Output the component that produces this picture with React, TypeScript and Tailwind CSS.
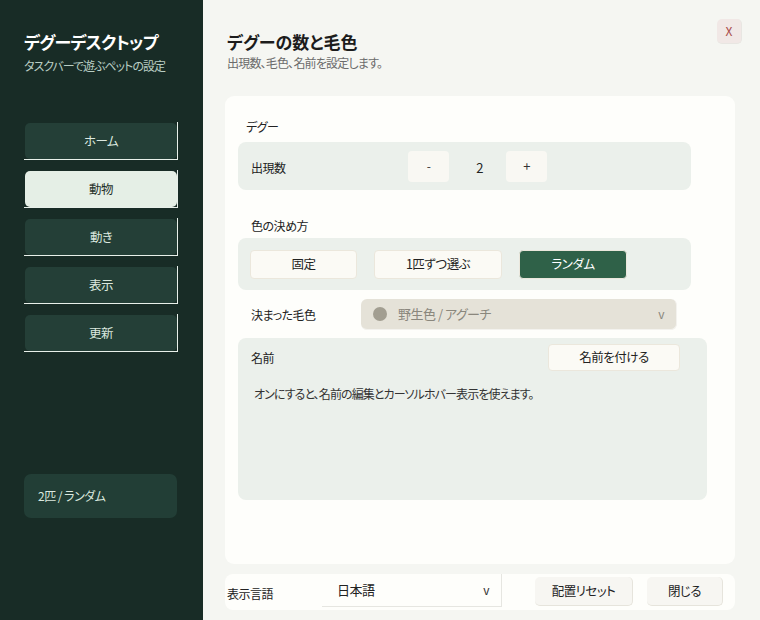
import React from "react";

const navItems = ["ホーム", "動物", "動き", "表示", "更新"];

function NavItem({ label, active }: { label: string; active?: boolean }) {
  return (
    <div className="w-[154px] h-[38px] pl-px pt-px border-r border-b border-[#e8f0ea]">
      <div
        className={
          "w-[152px] h-[36px] rounded-[5px] flex items-center justify-center text-[12.5px] tracking-[-0.6px] " +
          (active ? "bg-[#e5efe6] text-[#1f2f29]" : "bg-[#243f37] text-[#dbe8df]")
        }
      >
        {label}
      </div>
    </div>
  );
}

function ChoiceButton({ label, w, active }: { label: string; w: string; active?: boolean }) {
  return (
    <div
      className={
        w +
        " h-[29px] rounded-[4px] border border-[#ebe7dc] flex items-center justify-center text-[12.5px] tracking-[-0.5px] " +
        (active ? "bg-[#2f6148] text-white" : "bg-[#fbfaf5] text-[#222]")
      }
    >
      {label}
    </div>
  );
}

export default function App() {
  return (
    <div
      className="w-[760px] h-[620px] flex overflow-hidden [font-feature-settings:'palt']"
      style={{ fontFamily: "'Noto Sans CJK JP', 'Noto Sans', sans-serif" }}
    >
      <aside className="w-[203px] h-full bg-[#182c26] flex flex-col pl-[24px] pt-[30px]">
        <h1 className="text-[17px] leading-[24px] font-bold text-white tracking-[-0.7px]">デグーデスクトップ</h1>
        <p className="text-[12px] leading-[16px] mt-[4px] text-[#b8cdc3] tracking-[-1px]">タスクバーで遊ぶペットの設定</p>
        <nav className="mt-[48px] flex flex-col gap-[10px]">
          {navItems.map((n) => (
            <NavItem key={n} label={n} active={n === "動物"} />
          ))}
        </nav>
        <div className="mt-[122px] w-[153px] h-[44px] rounded-[7px] bg-[#223e36] flex items-center pl-[14px] text-[12px] text-[#dbe8df] tracking-[-0.5px]">
          2匹 / ランダム
        </div>
      </aside>

      <main className="flex-1 h-full bg-[#f5f6f2] flex flex-col pl-[22px]">
        <div className="h-[96px] flex justify-between items-start pt-[19px] pr-[18px]">
          <div className="mt-[11px] ml-[2px]">
            <h2 className="text-[17px] leading-[24px] font-bold text-[#1c1c1c]">デグーの数と毛色</h2>
            <p className="text-[12px] leading-[16px] mt-[1px] text-[#6b6b6b] tracking-[-0.8px]">出現数、毛色、名前を設定します。</p>
          </div>
          <div className="w-[25px] h-[25px] rounded-[5px] bg-[#f1e8e6] border-r border-b border-[#e8e6e2] flex items-center justify-center text-[12px] text-[#a84848]">
            X
          </div>
        </div>

        <section className="w-[510px] h-[468px] bg-[#fefefb] rounded-[9px] pt-[23px] flex flex-col text-[12px] tracking-[-0.5px]">
          <div className="ml-[21px] text-[12px] leading-[16px] text-[#222]">デグー</div>
          <div className="ml-[13px] mt-[7px] w-[453px] h-[48px] rounded-[8px] bg-[#ebf0eb] flex items-center pl-[13px]">
            <span className="w-[157px] text-[12px] text-[#222] mt-[3px]">出現数</span>
            <div className="w-[41px] h-[31px] rounded-[4px] bg-[#f9f8f3] flex items-center justify-center text-[12px] text-[#333]">
              -
            </div>
            <span className="w-[57px] text-center text-[13px] text-[#222] pl-[4px] mt-[3px]">2</span>
            <div className="w-[41px] h-[31px] rounded-[4px] bg-[#f9f8f3] flex items-center justify-center text-[13px] text-[#333]">
              +
            </div>
          </div>

          <div className="ml-[26px] mt-[28px] text-[12px] leading-[16px] text-[#222]">色の決め方</div>
          <div className="ml-[13px] mt-[4px] w-[453px] h-[52px] rounded-[8px] bg-[#ebf0eb] flex items-center pl-[12px] gap-[17px]">
            <ChoiceButton label="固定" w="w-[107px]" />
            <ChoiceButton label="1匹ずつ選ぶ" w="w-[128px]" />
            <ChoiceButton label="ランダム" w="w-[108px]" active />
          </div>

          <div className="ml-[26px] mt-[9px] flex items-center">
            <span className="w-[110px] text-[12px] text-[#222]">決まった毛色</span>
            <div className="w-[316px] h-[31px] rounded-[6px] bg-[#e5e2d8] border-r border-b border-[#f3f2ee] flex items-center pl-[12px] pr-[12px]">
              <span className="w-[14px] h-[14px] rounded-full bg-[#a29e91]" />
              <span className="ml-[11px] text-[13px] text-[#8a877d]">野生色 / アグーチ</span>
              <span className="ml-auto text-[12px] text-[#8a877d]">v</span>
            </div>
          </div>

          <div className="ml-[13px] mt-[8px] w-[469px] h-[162px] rounded-[8px] bg-[#ebf0eb] pt-[6px] flex flex-col">
            <div className="flex items-center justify-between pl-[13px] pr-[27px]">
              <span className="text-[12px] text-[#222]">名前</span>
              <div className="w-[132px] h-[27px] rounded-[4px] bg-[#fbfaf5] border border-[#ebe7dc] flex items-center justify-center text-[12.5px] text-[#222]">
                名前を付ける
              </div>
            </div>
            <p className="pl-[16px] mt-[15px] text-[12px] leading-[16px] text-[#333] tracking-[-0.9px]">
              オンにすると、名前の編集とカーソルホバー表示を使えます。
            </p>
          </div>
        </section>

        <footer className="mt-[10px] w-[510px] h-[36px] rounded-[8px] bg-[#fefefb] flex items-start pl-[2px] pr-[12px] tracking-[-0.5px]">
          <span className="w-[95px] mt-[12px] text-[12px] leading-[16px] text-[#222]">表示言語</span>
          <div className="w-[180px] h-[33px] border-r border-b border-[#e6e6e1] flex items-center pl-[15px] pr-[12px]">
            <span className="text-[13px] text-[#222]">日本語</span>
            <span className="ml-auto text-[12px] text-[#333]">v</span>
          </div>
          <div className="ml-auto mt-[3px] flex gap-[14px]">
            <div className="w-[98px] h-[29px] rounded-[5px] bg-[#f7f6f2] border-r border-b border-[#e6e4dc] flex items-center justify-center text-[12.5px] text-[#222]">
              配置リセット
            </div>
            <div className="w-[76px] h-[29px] rounded-[5px] bg-[#f7f6f2] border-r border-b border-[#e6e4dc] flex items-center justify-center text-[12.5px] text-[#222]">
              閉じる
            </div>
          </div>
        </footer>
      </main>
    </div>
  );
}
